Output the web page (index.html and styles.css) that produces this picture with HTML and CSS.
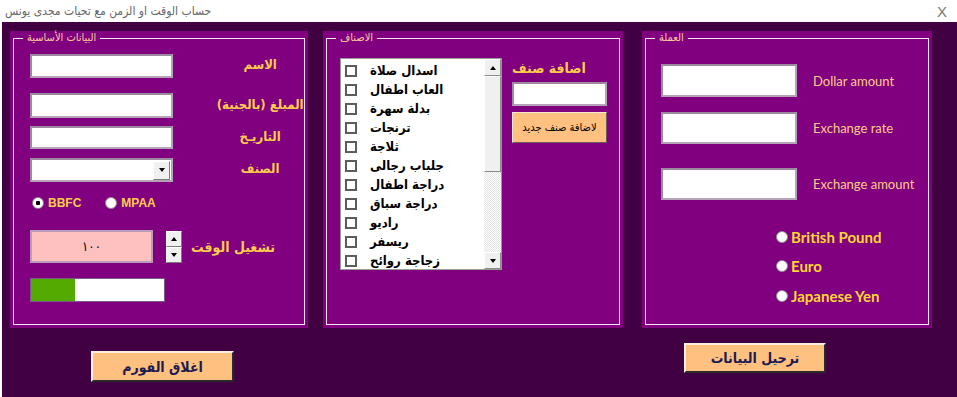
FILE: index.html
```html
<!DOCTYPE html>
<html lang="ar">
<head>
    <meta charset="UTF-8">
    <title>حساب الوقت او الزمن</title>
    <link rel="stylesheet" href="styles.css">
</head>
<body>
    <div class="titlebar">
        <span class="title">حساب الوقت او الزمن مع تحيات مجدى يونس</span>
        <span class="close">X</span>
    </div>

    <div class="client">
        <!-- basic data -->
        <div class="column col-basic">
            <div class="panel">
                <fieldset>
                    <legend>البيانات الأساسية</legend>
                    <div class="basic-row row-name">
                        <div class="text-box"></div>
                        <span class="field-label" dir="rtl">الاسم</span>
                    </div>
                    <div class="basic-row row-amount">
                        <div class="text-box"></div>
                        <span class="field-label" dir="rtl">المبلغ (بالجنية)</span>
                    </div>
                    <div class="basic-row row-date">
                        <div class="text-box"></div>
                        <span class="field-label" dir="rtl">التاريـخ</span>
                    </div>
                    <div class="basic-row row-kind">
                        <div class="text-box combo">
                            <span class="combo-btn"><i class="arrow-down"></i></span>
                        </div>
                        <span class="field-label" dir="rtl">الصنف</span>
                    </div>
                    <div class="basic-row row-rating">
                        <span class="radio"><span class="radio-dot checked"></span>BBFC</span>
                        <span class="radio radio-mpaa"><span class="radio-dot"></span>MPAA</span>
                    </div>
                    <div class="basic-row row-timer">
                        <div class="spin-box">١٠٠</div>
                        <div class="spinner">
                            <span class="spin-half"><i class="arrow-up"></i></span>
                            <span class="spin-half"><i class="arrow-down"></i></span>
                        </div>
                        <span class="timer-label" dir="rtl">تشغيل الوقت</span>
                    </div>
                    <div class="basic-row row-progress">
                        <div class="progress"><span class="progress-fill" style="width: 44px;"></span></div>
                    </div>
                </fieldset>
            </div>
            <button class="form-btn close-btn" type="button">اغلاق الفورم</button>
        </div>

        <!-- items -->
        <div class="column col-items">
            <div class="panel">
                <fieldset>
                    <legend>الاصناف</legend>
                    <div class="items-body">
                        <div class="listbox">
                            <div class="list-items">
                                <div class="list-item"><span class="check-box"></span><span>اسدال صلاة</span></div>
                                <div class="list-item"><span class="check-box"></span><span>العاب اطفال</span></div>
                                <div class="list-item"><span class="check-box"></span><span>بدلة سهرة</span></div>
                                <div class="list-item"><span class="check-box"></span><span>ترنجات</span></div>
                                <div class="list-item"><span class="check-box"></span><span>ثلاجة</span></div>
                                <div class="list-item"><span class="check-box"></span><span>جلباب رجالى</span></div>
                                <div class="list-item"><span class="check-box"></span><span>دراجة اطفال</span></div>
                                <div class="list-item"><span class="check-box"></span><span>دراجة سباق</span></div>
                                <div class="list-item"><span class="check-box"></span><span>راديو</span></div>
                                <div class="list-item"><span class="check-box"></span><span>ريسفر</span></div>
                                <div class="list-item"><span class="check-box"></span><span>زجاجة روائح</span></div>
                            </div>
                            <div class="scrollbar">
                                <span class="scroll-btn"><i class="arrow-up"></i></span>
                                <span class="scroll-thumb"></span>
                                <span class="scroll-track"></span>
                                <span class="scroll-btn"><i class="arrow-down"></i></span>
                            </div>
                        </div>
                        <div class="add-item">
                            <span class="add-label" dir="rtl">اضافة صنف</span>
                            <div class="text-box add-input"></div>
                            <button class="add-btn" type="button" dir="rtl">لاضافة صنف جديد</button>
                        </div>
                    </div>
                </fieldset>
            </div>
        </div>

        <!-- currency -->
        <div class="column col-money">
            <div class="panel">
                <fieldset>
                    <legend>العملة</legend>
                    <div class="money-row money-dollar">
                        <div class="text-box"></div>
                        <span class="money-label">Dollar amount</span>
                    </div>
                    <div class="money-row money-rate">
                        <div class="text-box"></div>
                        <span class="money-label">Exchange rate</span>
                    </div>
                    <div class="money-row money-result">
                        <div class="text-box"></div>
                        <span class="money-label">Exchange amount</span>
                    </div>
                    <div class="currency-list">
                        <span class="currency"><span class="radio-dot"></span>British Pound</span>
                        <span class="currency"><span class="radio-dot"></span>Euro</span>
                        <span class="currency"><span class="radio-dot"></span>Japanese Yen</span>
                    </div>
                </fieldset>
            </div>
            <button class="form-btn post-btn" type="button">ترحيل البيانات</button>
        </div>
    </div>
</body>
</html>
```

FILE: styles.css
```css
body {
    margin: 0;
    width: 957px;
    height: 397px;
    overflow: hidden;
    background-color: #fff;
    font-family: "DejaVu Sans Condensed", "DejaVu Sans", sans-serif;
}

.titlebar {
    height: 22px;
    display: flex;
    align-items: center;
    justify-content: space-between;
    padding: 0 10px 0 5px;
    color: #666;
    font-size: 12px;
}

.close {
    font-family: "Liberation Sans", sans-serif;
    font-size: 15px;
    color: #777;
}

.client {
    margin-left: 2px;
    height: 375px;
    box-sizing: border-box;
    padding: 9px 0 0 8px;
    background-color: #410041;
    display: flex;
}

.column {
    display: flex;
    flex-direction: column;
    align-items: flex-start;
}

.col-basic {
    width: 298px;
}

.col-items {
    width: 300px;
    margin-left: 15px;
}

.col-money {
    width: 290px;
    margin-left: 19px;
}

.panel {
    width: 100%;
    height: 297px;
    box-sizing: border-box;
    padding: 0 3px 3px;
    background-color: #800080;
}

.panel fieldset {
    margin: 0;
    padding: 0;
    min-width: 0;
    height: 100%;
    box-sizing: border-box;
    border: 1px solid #f4e8f4;
}

.panel legend {
    margin-left: 9px;
    padding: 0 4px;
    font-size: 11px;
    line-height: 14px;
    color: #ffcc99;
}

/* shared controls */
.text-box {
    width: 147px;
    height: 100%;
    box-sizing: border-box;
    background-color: #fff;
    border: 2px solid #b4a2b6;
    border-top-color: #9c8a9e;
    border-left-color: #9c8a9e;
}

.arrow-down,
.arrow-up {
    width: 0;
    height: 0;
    border-left: 3px solid transparent;
    border-right: 3px solid transparent;
}

.arrow-down {
    border-top: 4px solid #000;
}

.arrow-up {
    border-bottom: 4px solid #000;
}

.radio-dot {
    width: 12px;
    height: 12px;
    box-sizing: border-box;
    border-radius: 50%;
    border: 1px solid #8c8c8c;
    background-color: #fff;
    flex-shrink: 0;
}

.radio-dot.checked {
    background: radial-gradient(circle, #000 0 2px, #fff 2.5px);
}

/* basic data */
.basic-row {
    display: flex;
    align-items: center;
    margin-left: 16px;
}

.row-name { margin-top: 9px; height: 24px; }
.row-amount { margin-top: 15px; height: 25px; }
.row-date { margin-top: 8px; height: 23px; }
.row-kind { margin-top: 9px; height: 24px; }
.row-rating { margin-top: 14px; height: 13px; margin-left: 18px; }
.row-timer { margin-top: 21px; height: 33px; }
.row-progress { margin-top: 15px; height: 24px; }

.field-label {
    width: 90px;
    margin: 0 0 3px 43px;
    text-align: center;
    white-space: nowrap;
    font-weight: bold;
    font-size: 13px;
    color: #ffcc4d;
}

.combo {
    display: flex;
    justify-content: flex-end;
    align-items: center;
    padding-right: 1px;
}

.combo-btn {
    width: 17px;
    height: 19px;
    box-sizing: border-box;
    background-color: #f0f0f0;
    border: 1px solid;
    border-color: #fff #7c7c7c #7c7c7c #fff;
    display: flex;
    align-items: center;
    justify-content: center;
}

.radio {
    display: flex;
    align-items: center;
    gap: 4px;
    font-family: "Liberation Sans", sans-serif;
    font-weight: bold;
    font-size: 12px;
    color: #ffcc4d;
}

.radio-mpaa {
    margin-left: 24px;
}

.spin-box {
    width: 123px;
    height: 100%;
    box-sizing: border-box;
    background-color: #ffc0c0;
    border: 2px solid #b89cba;
    display: flex;
    align-items: center;
    justify-content: center;
    font-size: 13px;
    color: #000;
}

.spinner {
    margin-left: 13px;
    width: 16px;
    height: 32px;
    display: flex;
    flex-direction: column;
}

.spin-half {
    flex: 1;
    background-color: #f0f0f0;
    border: 1px solid;
    border-color: #fff #7c7c7c #7c7c7c #fff;
    display: flex;
    align-items: center;
    justify-content: center;
}

.timer-label {
    margin-left: 9px;
    white-space: nowrap;
    font-weight: bold;
    font-size: 14px;
    color: #ffcc4d;
}

.progress {
    width: 135px;
    height: 100%;
    box-sizing: border-box;
    border: 1px solid #7a5a88;
    background-color: #fff;
    display: flex;
}

.progress-fill {
    background-color: #55aa00;
}

/* items */
.items-body {
    display: flex;
    align-items: flex-start;
    margin: 13px 0 0 13px;
}

.listbox {
    width: 162px;
    height: 212px;
    box-sizing: border-box;
    border: 1px solid #9a9a9a;
    background-color: #fff;
    display: flex;
}

.list-items {
    flex: 1;
    padding-top: 2px;
    overflow: hidden;
}

.list-item {
    height: 19px;
    display: flex;
    align-items: center;
    font-weight: bold;
    font-size: 13px;
    color: #000;
    white-space: nowrap;
}

.check-box {
    width: 12px;
    height: 12px;
    box-sizing: border-box;
    margin: 0 13px 0 4px;
    border: 2px solid #5c5c5c;
    background-color: #fff;
}

.scrollbar {
    width: 17px;
    display: flex;
    flex-direction: column;
}

.scroll-btn,
.scroll-thumb {
    box-sizing: border-box;
    background-color: #f0f0f0;
    border: 1px solid;
    border-color: #fff #8a8a8a #8a8a8a #fff;
}

.scroll-btn {
    height: 17px;
    display: flex;
    align-items: center;
    justify-content: center;
}

.scroll-thumb {
    height: 96px;
}

.scroll-track {
    flex: 1;
    background: repeating-conic-gradient(#fff 0 25%, #e2e2e2 0 50%) 0 0 / 2px 2px;
}

.add-item {
    margin-left: 10px;
    width: 95px;
    display: flex;
    flex-direction: column;
    align-items: flex-start;
}

.add-label {
    height: 20px;
    line-height: 20px;
    white-space: nowrap;
    font-weight: bold;
    font-size: 14px;
    color: #ffcc4d;
}

.add-input {
    margin-top: 4px;
    width: 95px;
    height: 24px;
}

.add-btn {
    margin-top: 6px;
    width: 95px;
    height: 31px;
    padding: 0;
    background-color: #ffc080;
    border: 1px solid;
    border-color: #ffe8d0 #6a5a5a #6a5a5a #ffe8d0;
    font-family: "DejaVu Sans Condensed", "DejaVu Sans", sans-serif;
    font-size: 11px;
    color: #000;
}

/* currency */
.money-row {
    display: flex;
    align-items: center;
    margin-left: 15px;
}

.money-row .text-box {
    width: 136px;
}

.money-dollar { margin-top: 19px; height: 33px; }
.money-rate { margin-top: 15px; height: 32px; }
.money-result { margin-top: 24px; height: 32px; }

.money-label {
    margin-left: 16px;
    font-family: Lato, sans-serif;
    font-size: 13px;
    color: #ffcc88;
}

.currency-list {
    margin: 22px 0 0 130px;
    display: flex;
    flex-direction: column;
}

.currency {
    height: 29.5px;
    display: flex;
    align-items: center;
    gap: 3px;
    font-family: Lato, sans-serif;
    font-weight: bold;
    font-size: 15px;
    color: #ffd633;
}

/* bottom buttons */
.form-btn {
    padding: 0;
    background-color: #ffc080;
    border: 2px solid;
    border-color: #fff1e0 #2a2a2a #2a2a2a #fff1e0;
    font-family: "DejaVu Sans Condensed", "DejaVu Sans", sans-serif;
    font-weight: bold;
    font-size: 14px;
    color: #1c1c50;
}

.close-btn {
    margin: 23px 0 0 81px;
    width: 143px;
    height: 31px;
}

.post-btn {
    margin: 15px 0 0 42px;
    width: 142px;
    height: 30px;
}
```
